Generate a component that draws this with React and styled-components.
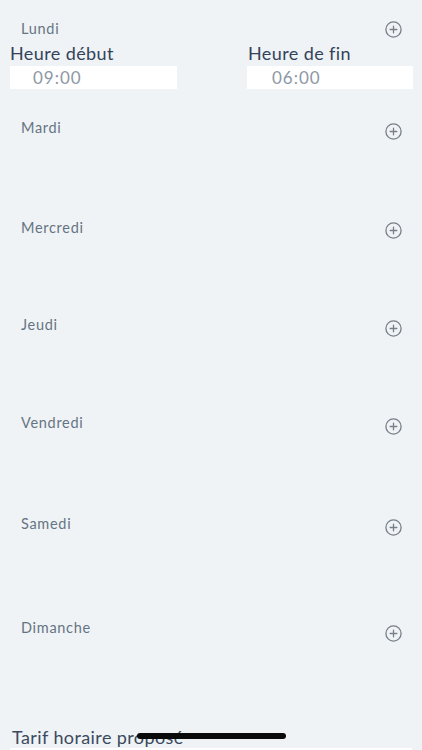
import React from "react";
import styled, { createGlobalStyle } from "styled-components";

const Global = createGlobalStyle`
  html, body { margin: 0; padding: 0; background: #eff3f5; }
  body { font-family: Lato, "Noto Sans", sans-serif; }
`;

const Page = styled.div`
  position: relative;
  width: 422px;
  height: 750px;
  overflow: hidden;
  background: #eff3f5;
  padding-top: 19px;
  box-sizing: border-box;
`;

const DaySection = styled.section`
  height: ${(p) => p.$pitch}px;
  box-sizing: border-box;
`;

const DayHeader = styled.div`
  display: flex;
  justify-content: space-between;
  align-items: flex-start;
  padding: 0 20px 0 21px;
`;

const DayLabel = styled.span`
  font-size: 14.5px;
  line-height: 20px;
  color: #667383;
  letter-spacing: 0.7px;
`;

const AddButton = styled.button`
  margin-top: ${(p) => p.$offset}px;
  width: 17px;
  height: 17px;
  padding: 0;
  border: none;
  background: none;
  display: flex;
  color: #767f8a;
`;

const TimeGrid = styled.div`
  display: grid;
  grid-template-columns: 167px 166px;
  justify-content: space-between;
  padding: 3px 9px 0 10px;
`;

const Field = styled.div`
  display: flex;
  flex-direction: column;
  gap: 2px;
`;

const FieldLabel = styled.span`
  font-size: 18px;
  line-height: 22px;
  color: #33425a;
  letter-spacing: 0.4px;
  padding-left: ${(p) => p.$indent || 0}px;
`;

const TimeInput = styled.div`
  height: 23px;
  background: #ffffff;
  font-size: 17px;
  line-height: 23px;
  color: #8d98a4;
  padding-left: ${(p) => p.$indent}px;
  letter-spacing: 1px;
`;

const Tarif = styled.div`
  display: flex;
  flex-direction: column;
  padding: 0 10px;
`;

const TarifLabel = styled.span`
  font-size: 18px;
  line-height: 22px;
  color: #3b4a5e;
  letter-spacing: 0.4px;
  padding-left: 2px;
`;

const TarifInput = styled.div`
  height: 30px;
  background: #ffffff;
`;

const HomeIndicator = styled.div`
  position: absolute;
  left: 137px;
  top: 733px;
  width: 149px;
  height: 6px;
  border-radius: 3px;
  background: #0a0a0a;
`;

const PlusIcon = () => (
  <svg width="17" height="17" viewBox="0 0 17 17" fill="none" stroke="currentColor" strokeWidth="1.3" strokeLinecap="round">
    <circle cx="8.5" cy="8.5" r="7.6" />
    <path d="M8.5 5.2v6.6M5.2 8.5h6.6" />
  </svg>
);

const days = [
  { name: "Lundi", pitch: 99, offset: 2, times: true },
  { name: "Mardi", pitch: 100, offset: 5 },
  { name: "Mercredi", pitch: 97, offset: 4 },
  { name: "Jeudi", pitch: 98, offset: 5 },
  { name: "Vendredi", pitch: 101, offset: 5 },
  { name: "Samedi", pitch: 104, offset: 5 },
  { name: "Dimanche", pitch: 108, offset: 7 },
];

export default function App() {
  return (
    <>
      <Global />
      <Page>
        {days.map((d) => (
          <DaySection key={d.name} $pitch={d.pitch}>
            <DayHeader>
              <DayLabel>{d.name}</DayLabel>
              <AddButton $offset={d.offset} aria-label={`Ajouter ${d.name}`}>
                <PlusIcon />
              </AddButton>
            </DayHeader>
            {d.times && (
              <TimeGrid>
                <Field>
                  <FieldLabel>Heure début</FieldLabel>
                  <TimeInput $indent={23}>09:00</TimeInput>
                </Field>
                <Field>
                  <FieldLabel $indent={1}>Heure de fin</FieldLabel>
                  <TimeInput $indent={25}>06:00</TimeInput>
                </Field>
              </TimeGrid>
            )}
          </DaySection>
        ))}
        <Tarif>
          <TarifLabel>Tarif horaire proposé</TarifLabel>
          <TarifInput />
        </Tarif>
        <HomeIndicator />
      </Page>
    </>
  );
}
